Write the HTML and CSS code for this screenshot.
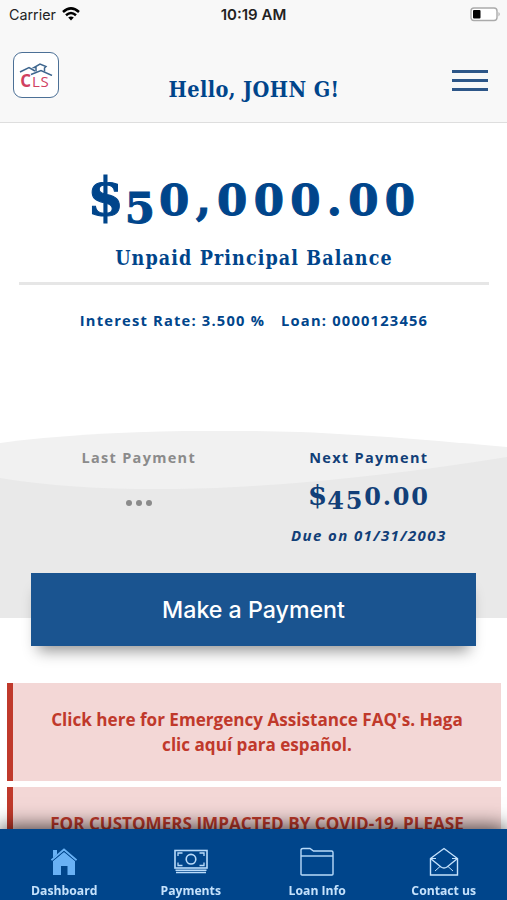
FILE: index.html
```
<!doctype html>
<html lang="en">
<head>
<meta charset="utf-8">
<meta name="viewport" content="width=device-width,initial-scale=1">
<title>Dashboard</title>
<link rel="stylesheet" href="styles.css">
</head>
<body>
<div class="app">
  <header class="header">
    <div class="status-bar">
      <div class="carrier">
        <span>Carrier</span>
        <svg width="18" height="14" viewBox="0 0 18 14" fill="none" stroke="#000" stroke-width="2.5">
          <path d="M1 5 Q9 -2.2 17 5"/>
          <path d="M4 8.3 Q9 3.8 14 8.3"/>
          <path d="M6.2 10.6 Q9 8.3 11.8 10.6 L9 13.6Z" fill="#000" stroke="none"/>
        </svg>
      </div>
      <strong class="time">10:19 AM</strong>
      <svg class="battery" width="31" height="15" viewBox="0 0 31 15">
        <rect x="1" y="1" width="26" height="12.5" rx="3" fill="#fff" stroke="#aaa" stroke-width="1.4"/>
        <rect x="3" y="3" width="7.5" height="8.5" rx="1" fill="#000"/>
        <path d="M28.5 5 Q31 7.2 28.5 9.5Z" fill="#aaa"/>
      </svg>
    </div>
    <div class="title-bar">
      <div class="logo">
        <svg width="34" height="13" viewBox="0 0 34 13" fill="none" stroke="#3e668e" stroke-width="1.5">
          <path d="M1 9 L10 4.5 L16 8"/>
          <path d="M12 11.5 L22 7.5 L33 12.5"/>
          <path d="M17 8.5 V4.5 H15 L21 1 L27 3.5 L25.5 5 V8.5"/>
        </svg>
        <span class="logo-text"><b>C</b>LS</span>
      </div>
      <h1>Hello, JOHN G!</h1>
      <div class="menu"><i></i><i></i><i></i></div>
    </div>
  </header>

  <main>
    <section class="balance">
      <div class="amount"><span class="sign">$</span><span class="low">5</span>0,000.00</div>
      <h2>Unpaid Principal Balance</h2>
      <hr>
      <div class="loan-line"><span>Interest Rate: 3.500 %</span><span>Loan: 0000123456</span></div>
    </section>

    <section class="payments">
      <svg class="wave" width="507" height="187" viewBox="0 0 507 187" preserveAspectRatio="none">
        <path d="M0 12 C90 0 200 -2 300 1 C370 4 430 9 507 16 V187 H0Z" fill="#f1f1f1"/>
        <path d="M0 47 C70 59 160 60 235 56 C330 51 420 40 507 26 V187 H0Z" fill="#e9e9e9"/>
      </svg>
      <div class="columns">
        <div class="payment last">
          <h3>Last Payment</h3>
          <div class="dots"><i></i><i></i><i></i></div>
        </div>
        <div class="payment next">
          <h3>Next Payment</h3>
          <div class="amount-small"><span class="sign">$</span><span class="low">45</span>0.00</div>
          <em>Due on 01/31/2003</em>
        </div>
      </div>
      <button class="pay-button">Make a Payment</button>
    </section>

    <section class="alerts">
      <div class="alert">Click here for Emergency Assistance FAQ's. Haga<br>clic aquí para español.</div>
      <div class="alert">FOR CUSTOMERS IMPACTED BY COVID-19, PLEASE</div>
    </section>
  </main>

  <nav class="tabs">
    <div class="tab">
      <svg width="34" height="30" viewBox="0 0 34 30">
        <path d="M6 28 V14 L17 5 L28 14 V28 H20.5 V19 H14 V28Z" fill="#69b1f5"/>
        <path d="M6 11 V3 H10 V7.5Z" fill="#69b1f5"/>
        <path d="M4.5 13.3 L17 2.5 L29.5 13.3" fill="none" stroke="#69b1f5" stroke-width="2"/>
        <path d="M5 14.5 L17 4.3 L29 14.5" fill="none" stroke="#00458b" stroke-width=".7"/>
      </svg>
      <span>Dashboard</span>
    </div>
    <div class="tab">
      <svg width="34" height="30" viewBox="0 0 34 30" fill="none" stroke="#b9dbfa">
        <rect x="1" y="3.5" width="32" height="17.5" stroke-width="1.6"/>
        <circle cx="17" cy="12.2" r="4.8" stroke-width="1.6"/>
        <path d="M4 9 V6 H8.5 M25.5 6 H30 V9 M4 15.5 V18.5 H8.5 M25.5 18.5 H30 V15.5" stroke-width="1.3"/>
        <path d="M1.5 23.2 H32.5 M2 25.5 H32" stroke-width="1.4"/>
      </svg>
      <span>Payments</span>
    </div>
    <div class="tab">
      <svg width="34" height="30" viewBox="0 0 34 30" fill="none" stroke="#b9dbfa" stroke-width="1.4">
        <path d="M1 27 V3 Q1 1.5 3 1.5 H10 L13.5 4 H31.5 Q33 4 33 5.5 V27 Q33 28 32 28 H2 Q1 28 1 27Z"/>
        <path d="M1 9 H33"/>
      </svg>
      <span>Loan Info</span>
    </div>
    <div class="tab">
      <svg width="34" height="30" viewBox="0 0 34 30" fill="none" stroke="#c5e2fc" stroke-width="1.4">
        <path d="M3.5 11.5 L17 1.5 L30.5 11.5 V28 H3.5Z"/>
        <path d="M3.5 11.5 L14 20 Q17 22 20 20 L30.5 11.5"/>
        <path d="M8 24 L13 19.5 M26 24 L21 19.5 M4 11.5 H9 M30 11.5 H25" stroke-width="1"/>
      </svg>
      <span>Contact us</span>
    </div>
  </nav>
</div>
</body>
</html>
```
FILE: styles.css
```
* {
    box-sizing: border-box;
}
body {
    margin: 0;
    font-family: "Open Sans", "Noto Sans", sans-serif;
    background: #fff;
    color: #00458b;
}
h1, h2, h3 {
    margin: 0;
}
.app {
    height: 900px;
    display: flex;
    flex-direction: column;
    overflow: hidden;
}
.header {
    height: 123px;
    flex: none;
    background: #f8f8f8;
    border-bottom: 1px solid #dedede;
}
.status-bar {
    height: 28px;
    padding: 0 6px 0 9px;
    display: grid;
    grid-template-columns: 1fr auto 1fr;
    align-items: center;
    font-family: Inter, sans-serif;
    font-size: 14.3px;
    color: #222;
}
.carrier {
    display: flex;
    align-items: center;
    gap: 6px;
}
.time {
    margin-right: 3px;
    font-weight: 600;
    font-size: 15px;
}
.battery {
    justify-self: end;
}
.title-bar {
    height: 94px;
    padding: 24px 19px 0 13px;
    display: grid;
    grid-template-columns: 46px 1fr 36px;
}
.logo {
    height: 46px;
    padding-top: 10px;
    border: 1.5px solid #4c7096;
    border-radius: 9px;
    background: #fff;
    display: flex;
    flex-direction: column;
    align-items: center;
}
.logo-text {
    margin-right: 2px;
    font-size: 15px;
    font-weight: 400;
    line-height: 10px;
    letter-spacing: .8px;
    color: #d0405f;
}
.logo-text b {
    font-size: 17px;
    line-height: 0;
}
h1, h2 {
    font-family: "DejaVu Serif Condensed", "DejaVu Serif", serif;
    font-stretch: condensed;
    font-weight: bold;
    text-align: center;
}
h1 {
    padding: 23px 3px 0 0;
    font-size: 21.5px;
    line-height: 30px;
    letter-spacing: .4px;
    white-space: nowrap;
}
.menu {
    height: 21px;
    margin-top: 18px;
    display: flex;
    flex-direction: column;
    justify-content: space-between;
}
.menu i {
    height: 3px;
    background: #2d5688;
}
.balance {
    height: 308px;
    padding: 42px 18px 0 19px;
}
.amount, .amount-small {
    font-family: "DejaVu Serif", serif;
    font-weight: bold;
    text-align: center;
    white-space: nowrap;
}
.amount {
    height: 70px;
    padding-left: 1px;
    font-size: 43.5px;
    line-height: 70px;
    letter-spacing: 6.3px;
    -webkit-text-stroke: 1px #00458b;
}
.sign, .low {
    line-height: 0;
}
.amount .sign {
    font-size: 52px;
    letter-spacing: 1px;
}
.amount .low {
    vertical-align: -8px;
    letter-spacing: 4px;
}
h2 {
    padding-top: 9px;
    font-size: 19.5px;
    line-height: 30px;
    letter-spacing: 1.1px;
}
hr {
    height: 3px;
    margin: 8px 0 0;
    border: 0;
    background: #e6e6e6;
}
.loan-line {
    padding-top: 24px;
    display: flex;
    justify-content: center;
    gap: 16px;
    font-size: 14.7px;
    font-weight: 700;
    line-height: 22px;
    letter-spacing: 1.2px;
    white-space: nowrap;
}
.payments {
    height: 187px;
    position: relative;
}
.wave {
    position: absolute;
    left: 0;
    top: 0;
    z-index: -1;
}
.columns {
    height: 142px;
    padding: 16px 24px 0;
    display: grid;
    grid-template-columns: 1fr 1fr;
}
.payment {
    display: flex;
    flex-direction: column;
    align-items: center;
    color: #123f78;
}
.next {
    padding-left: 1px;
}
.last {
    color: #8b8b8b;
}
h3 {
    font-size: 14.5px;
    line-height: 22px;
    letter-spacing: 1.3px;
}
.dots {
    margin-top: 31px;
    display: flex;
    gap: 4px;
}
.dots i {
    width: 6px;
    height: 6px;
    border-radius: 50%;
    background: #8b8b8b;
}
.amount-small {
    height: 40px;
    margin-top: 4px;
    font-size: 24px;
    line-height: 48px;
    letter-spacing: 1.8px;
}
.amount-small .sign {
    font-size: 28px;
    letter-spacing: 0;
}
.amount-small .low {
    vertical-align: -4px;
}
.payment em {
    margin-top: 11px;
    font-size: 15px;
    font-weight: 700;
    line-height: 22px;
    letter-spacing: 1.4px;
}
.pay-button {
    display: block;
    width: 445px;
    height: 73px;
    margin: 0 31px;
    padding: 0;
    border: 0;
    background: #1a5490;
    color: #fff;
    font: 500 23.2px Inter, sans-serif;
    box-shadow: 0 12px 14px -7px rgba(0,0,0,.42);
}
.alerts {
    padding: 65px 6px 0 7px;
    display: flex;
    flex-direction: column;
    gap: 6px;
}
.alert {
    height: 98px;
    padding: 24px 0 0;
    border-left: 6px solid #c0392b;
    background: #f3d7d6;
    color: #c0392b;
    font-size: 17.1px;
    font-weight: 700;
    line-height: 25px;
    text-align: center;
    white-space: nowrap;
}
/* bottom tab bar, pinned over the scrolling alerts */
.tabs {
    position: fixed;
    left: 0;
    right: 0;
    bottom: 0;
    height: 71px;
    padding: 18px 0 0 1px;
    display: grid;
    grid-template-columns: repeat(4, 1fr);
    background: #00458b;
    box-shadow: 0 -2px 20px rgba(0,0,0,.75);
}
.tab {
    display: flex;
    flex-direction: column;
    align-items: center;
    gap: 5px;
    color: #c5e2fc;
    font-size: 12.2px;
    font-weight: 700;
    line-height: 17px;
}
```
